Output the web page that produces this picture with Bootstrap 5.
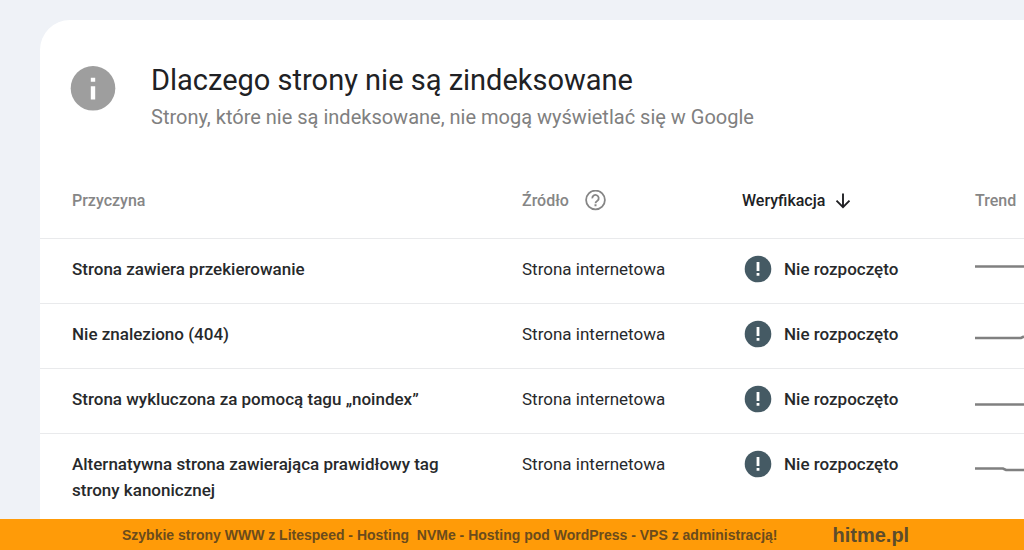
<!DOCTYPE html>
<html lang="pl">
<head>
<meta charset="utf-8">
<meta name="viewport" content="width=device-width, initial-scale=1">
<title>Dlaczego strony nie są zindeksowane</title>
<link href="https://cdn.jsdelivr.net/npm/bootstrap@5.3.0/dist/css/bootstrap.min.css" rel="stylesheet">
<style>
  body { background: #eff2f7; color: #27292b; font-family: Roboto, "Liberation Sans", sans-serif; font-size: 17px; line-height: 26px; }
  .panel { background: #fff; border-top-left-radius: 30px; margin: 20px 0 0 40px; }
  .panel-head { padding: 40px 32px 0 30px; gap: 35px; }
  .info-icon { width: 46px; height: 46px; margin-top: 5px; }
  .panel-title { font-size: 29px; line-height: 40px; font-weight: 400; color: #202124; }
  .panel-subtitle { font-size: 20px; line-height: 34px; color: #808080; }
  .reasons { table-layout: fixed; margin-top: 30px; }
  .reasons th, .reasons td { padding: 17px 0 21px; border-bottom: 1px solid #e9eaec; vertical-align: top; }
  .reasons th:first-child { padding-left: 32px; padding-right: 48px; }
  .reasons thead th { height: 74px; padding-top: 24px; padding-bottom: 23px; font-size: 16px; font-weight: 500; color: #868686; }
  .reasons tbody th { font-weight: 500; }
  .reasons tbody tr:last-child > * { border-bottom: 0; padding-bottom: 15px; }
  .col-source { width: 220px; }
  .col-check { width: 233px; }
  .col-trend { width: 49px; }
  .plain-btn { border: 0; padding: 0; background: none; color: inherit; font-weight: inherit; }
  .reasons .sorted { color: #202124; }
  .status { gap: 11px; height: 26px; padding-left: 1px; font-weight: 500; }
  .trend-line { width: 49px; height: 26px; }
  .promo { background: #ff9b08; color: #6b4b1c; min-height: 31px; gap: 55px; padding-left: 122px; font-family: "Liberation Sans", Arial, sans-serif; font-weight: 700; font-size: 14px; line-height: 30px; }
  .promo a { color: #5c4c2c; font-size: 20px; }
</style>
</head>
<body>
<svg class="d-none" aria-hidden="true">
  <symbol id="alert" viewBox="0 0 30 30"><circle cx="15" cy="15" r="13.3" fill="#455a64"/><path d="M13.6 8h2.8v9h-2.8zM13.6 19h2.8v2.8h-2.8z" fill="#fff"/></symbol>
</svg>
<div class="d-flex flex-column min-vh-100">
  <main class="panel flex-grow-1 overflow-hidden" id="panel">
    <header class="panel-head d-flex align-items-start">
      <svg class="info-icon flex-shrink-0" viewBox="0 0 46 46" aria-hidden="true"><circle cx="23" cy="23.3" r="22.3" fill="#9e9e9e"/><path d="M20.8 12.8h4.4v4h-4.4zM20.8 21.2h4.4v13.4h-4.4z" fill="#fff"/></svg>
      <div>
        <h1 class="panel-title mb-0">Dlaczego strony nie są zindeksowane</h1>
        <p class="panel-subtitle mb-0">Strony, które nie są indeksowane, nie mogą wyświetlać się w Google</p>
      </div>
    </header>
    <table class="reasons w-100">
      <colgroup><col><col class="col-source"><col class="col-check"><col class="col-trend"></colgroup>
      <thead>
        <tr>
          <th scope="col">Przyczyna</th>
          <th scope="col"><span class="d-flex align-items-center gap-3">Źródło
            <button type="button" class="plain-btn d-flex" aria-label="Pomoc"><svg width="22" height="22" viewBox="0 0 22 22" fill="none" stroke="#868686" stroke-width="1.8"><circle cx="10.5" cy="10" r="9.4"/><path d="M7.3 8.4a3.2 3.2 0 1 1 5.3 2.2C11.4 11.5 10.5 11.9 10.5 13.2"/><path d="M10.5 14.3v2" stroke-width="2"/></svg></button></span></th>
          <th scope="col" class="sorted" aria-sort="descending"><button type="button" class="plain-btn d-flex align-items-center gap-2">Weryfikacja <svg width="20" height="20" viewBox="0 0 20 20" fill="none" stroke="#202124" stroke-width="1.9" aria-hidden="true"><path d="M10 2.5v13.5M3.5 9.6l6.5 6.6 6.5-6.6"/></svg></button></th>
          <th scope="col">Trend</th>
        </tr>
      </thead>
      <tbody>
        <tr>
          <th scope="row">Strona zawiera przekierowanie</th><td>Strona internetowa</td>
          <td><span class="status d-flex align-items-center"><svg width="30" height="30" aria-hidden="true"><use href="#alert"/></svg>Nie rozpoczęto</span></td>
          <td><svg class="trend-line d-block" viewBox="0 0 49 26" fill="none" stroke="#808080" stroke-width="2.6"><path d="M0 10.5h49"/></svg></td>
        </tr>
        <tr>
          <th scope="row">Nie znaleziono (404)</th><td>Strona internetowa</td>
          <td><span class="status d-flex align-items-center"><svg width="30" height="30" aria-hidden="true"><use href="#alert"/></svg>Nie rozpoczęto</span></td>
          <td><svg class="trend-line d-block" viewBox="0 0 49 26" fill="none" stroke="#808080" stroke-width="2.6"><path d="M0 17h46l3-1.5"/></svg></td>
        </tr>
        <tr>
          <th scope="row">Strona wykluczona za pomocą tagu „noindex”</th><td>Strona internetowa</td>
          <td><span class="status d-flex align-items-center"><svg width="30" height="30" aria-hidden="true"><use href="#alert"/></svg>Nie rozpoczęto</span></td>
          <td><svg class="trend-line d-block" viewBox="0 0 49 26" fill="none" stroke="#808080" stroke-width="2.6"><path d="M0 18.5h49"/></svg></td>
        </tr>
        <tr>
          <th scope="row">Alternatywna strona zawierająca prawidłowy tag strony kanonicznej</th><td>Strona internetowa</td>
          <td><span class="status d-flex align-items-center"><svg width="30" height="30" aria-hidden="true"><use href="#alert"/></svg>Nie rozpoczęto</span></td>
          <td><svg class="trend-line d-block" viewBox="0 0 49 26" fill="none" stroke="#808080" stroke-width="2.6"><path d="M0 17.5h28l3 1.5h18"/></svg></td>
        </tr>
      </tbody>
    </table>
  </main>
  <footer class="promo d-flex align-items-center">
    <span>Szybkie strony WWW z Litespeed - Hosting&nbsp; NVMe - Hosting pod WordPress - VPS z administracją!</span>
    <a href="#panel" class="text-decoration-none">hitme.pl</a>
  </footer>
</div>
</body>
</html>
